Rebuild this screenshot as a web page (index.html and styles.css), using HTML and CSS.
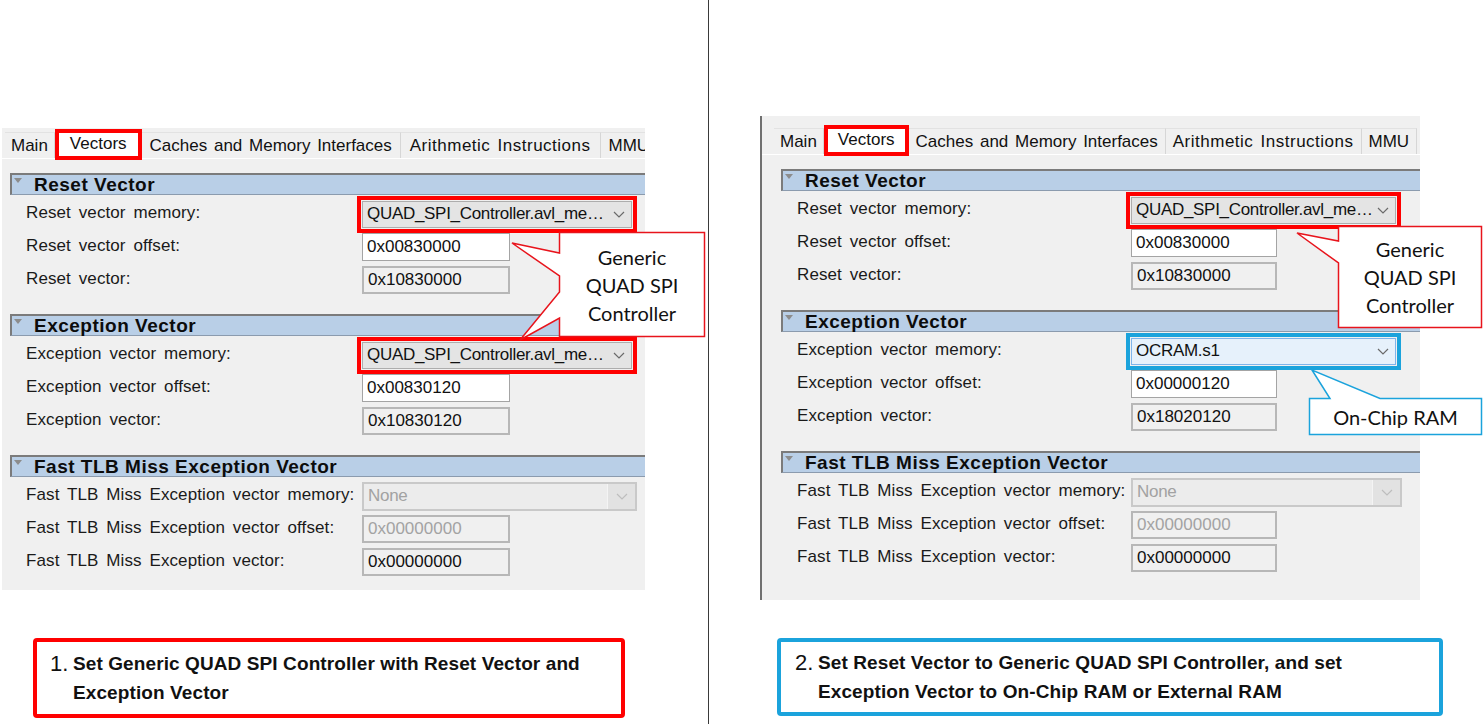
FILE: index.html
```html
<!DOCTYPE html>
<html lang="en">
<head>
<meta charset="utf-8">
<title>Vectors settings</title>
<link rel="stylesheet" href="styles.css">
</head>
<body>
<div class="canvas">
  <div class="col col-left">
    <div class="panel panel-left">
      <div class="tabs">
        <span class="tab">Main</span>
        <span class="tab active">Vectors</span>
        <span class="tab">Caches and Memory Interfaces</span>
        <span class="tab tab-wide">Arithmetic Instructions</span>
        <span class="tab">MMU</span>
      </div>
      <div class="page">
        <section class="sec">
          <div class="sec-head"><span class="tri"></span>Reset Vector</div>
          <div class="rows">
            <div class="row"><span class="lbl">Reset vector memory:</span><div class="combo mark-red"><span class="cv">QUAD_SPI_Controller.avl_me…</span><svg class="chev" width="12" height="7" viewBox="0 0 12 7"><path d="M1 1l5 5 5-5" fill="none" stroke="#6a6a6a" stroke-width="1.2"/></svg></div></div>
            <div class="row"><span class="lbl">Reset vector offset:</span><div class="field edit">0x00830000</div></div>
            <div class="row"><span class="lbl">Reset vector:</span><div class="field ro">0x10830000</div></div>
          </div>
        </section>
        <section class="sec">
          <div class="sec-head"><span class="tri"></span>Exception Vector</div>
          <div class="rows">
            <div class="row"><span class="lbl">Exception vector memory:</span><div class="combo mark-red"><span class="cv">QUAD_SPI_Controller.avl_me…</span><svg class="chev" width="12" height="7" viewBox="0 0 12 7"><path d="M1 1l5 5 5-5" fill="none" stroke="#6a6a6a" stroke-width="1.2"/></svg></div></div>
            <div class="row"><span class="lbl">Exception vector offset:</span><div class="field edit">0x00830120</div></div>
            <div class="row"><span class="lbl">Exception vector:</span><div class="field ro">0x10830120</div></div>
          </div>
        </section>
        <section class="sec">
          <div class="sec-head"><span class="tri"></span>Fast TLB Miss Exception Vector</div>
          <div class="rows">
            <div class="row"><span class="lbl">Fast TLB Miss Exception vector memory:</span><div class="combo disabled"><span class="cv">None</span><span class="btn"><svg class="chev" width="12" height="7" viewBox="0 0 12 7"><path d="M1 1l5 5 5-5" fill="none" stroke="#bdbdbd" stroke-width="1.2"/></svg></span></div></div>
            <div class="row"><span class="lbl">Fast TLB Miss Exception vector offset:</span><div class="field ro dis">0x00000000</div></div>
            <div class="row"><span class="lbl">Fast TLB Miss Exception vector:</span><div class="field ro">0x00000000</div></div>
          </div>
        </section>
      </div>
    </div>
    <div class="note note-red">
      <span class="num">1.</span>
      <div class="ntext">Set Generic QUAD SPI Controller with Reset Vector and<br>Exception Vector</div>
    </div>
  </div>

  <div class="col col-right">
    <div class="panel panel-right">
      <div class="tabs">
        <span class="tab">Main</span>
        <span class="tab active">Vectors</span>
        <span class="tab">Caches and Memory Interfaces</span>
        <span class="tab tab-wide">Arithmetic Instructions</span>
        <span class="tab">MMU</span>
      </div>
      <div class="page">
        <section class="sec">
          <div class="sec-head"><span class="tri"></span>Reset Vector</div>
          <div class="rows">
            <div class="row"><span class="lbl">Reset vector memory:</span><div class="combo mark-red"><span class="cv">QUAD_SPI_Controller.avl_me…</span><svg class="chev" width="12" height="7" viewBox="0 0 12 7"><path d="M1 1l5 5 5-5" fill="none" stroke="#6a6a6a" stroke-width="1.2"/></svg></div></div>
            <div class="row"><span class="lbl">Reset vector offset:</span><div class="field edit">0x00830000</div></div>
            <div class="row"><span class="lbl">Reset vector:</span><div class="field ro">0x10830000</div></div>
          </div>
        </section>
        <section class="sec">
          <div class="sec-head"><span class="tri"></span>Exception Vector</div>
          <div class="rows">
            <div class="row"><span class="lbl">Exception vector memory:</span><div class="combo focus mark-blue"><span class="cv">OCRAM.s1</span><svg class="chev" width="12" height="7" viewBox="0 0 12 7"><path d="M1 1l5 5 5-5" fill="none" stroke="#6a6a6a" stroke-width="1.2"/></svg></div></div>
            <div class="row"><span class="lbl">Exception vector offset:</span><div class="field edit">0x00000120</div></div>
            <div class="row"><span class="lbl">Exception vector:</span><div class="field ro">0x18020120</div></div>
          </div>
        </section>
        <section class="sec">
          <div class="sec-head"><span class="tri"></span>Fast TLB Miss Exception Vector</div>
          <div class="rows">
            <div class="row"><span class="lbl">Fast TLB Miss Exception vector memory:</span><div class="combo disabled"><span class="cv">None</span><span class="btn"><svg class="chev" width="12" height="7" viewBox="0 0 12 7"><path d="M1 1l5 5 5-5" fill="none" stroke="#bdbdbd" stroke-width="1.2"/></svg></span></div></div>
            <div class="row"><span class="lbl">Fast TLB Miss Exception vector offset:</span><div class="field ro dis">0x00000000</div></div>
            <div class="row"><span class="lbl">Fast TLB Miss Exception vector:</span><div class="field ro">0x00000000</div></div>
          </div>
        </section>
      </div>
    </div>
    <div class="note note-blue">
      <span class="num">2.</span>
      <div class="ntext">Set Reset Vector to Generic QUAD SPI Controller, and set<br>Exception Vector to On-Chip RAM or External RAM</div>
    </div>
  </div>

  <div class="callout co-left">
    <svg class="shape" width="146" height="105" viewBox="0 0 146 105"><path d="M0.5 0.5H145.5V104.5H0.5V86L-39 108L0.5 60V44L-47 11L0.5 21Z" fill="#fff" stroke="#e8141c" stroke-width="1.5"/></svg>
    <div class="ctext">Generic<br>QUAD SPI<br>Controller</div>
  </div>
  <div class="callout co-right">
    <svg class="shape" width="144" height="102" viewBox="0 0 144 102"><path d="M0.5 0.5H143.5V101.5H0.5V37L-41 7L0.5 15Z" fill="#fff" stroke="#e8141c" stroke-width="1.5"/></svg>
    <div class="ctext">Generic<br>QUAD SPI<br>Controller</div>
  </div>
  <div class="callout co-blue">
    <svg class="shape" width="173" height="37" viewBox="0 0 173 37"><path d="M0.5 0.5H21L3 -28L71 0.5H172.5V36.5H0.5Z" fill="#fff" stroke="#1ba3dc" stroke-width="1.5"/></svg>
    <div class="ctext">On-Chip RAM</div>
  </div>
</div>
</body>
</html>
```
FILE: styles.css
```css
* { box-sizing: border-box; margin: 0; padding: 0; }
html, body { width: 1483px; height: 724px; overflow: hidden; background: #fff; }
body { font-family: "Liberation Sans", Arial, sans-serif; color: #111; }

.canvas { position: relative; display: flex; width: 1483px; height: 724px; }
.col { display: flex; flex-direction: column; height: 724px; }
.col-left { width: 708px; padding-top: 128px; padding-left: 2px; }
.col-right { flex: 1; border-left: 1px solid #3a3a3a; padding-top: 116px; padding-left: 51px; }

/* dialog panels */
.panel { background: #f0f0f0; overflow: hidden; }
.panel-left { width: 643px; height: 462px; padding-top: 4px; }
.panel-right { width: 660px; height: 484px; padding-top: 12px; border-left: 2px solid #707070; }

.tabs { display: flex; height: 26px; white-space: nowrap; }
.panel-left .tabs { padding-left: 3px; }
.panel-right .tabs { padding-left: 12px; }
.tab {
  display: flex; align-items: center; padding: 0 8px;
  font-size: 17px; word-spacing: 2px;
  border-right: 1px solid #d6d6d6; border-top: 1px solid #e2e2e2;
  background: #f0f0f0; flex-shrink: 0;
}
.tab:first-child { padding: 0 6px; }
.tab-wide { padding: 0 9px; letter-spacing: 0.5px; }
.tab.active {
  position: relative; z-index: 1;
  background: #fff; border: 4px solid #f00;
  padding: 0 11px 2px; margin-top: -3px; margin-bottom: -2px;
}
.panel-right .tab { padding: 0 7px; }
.panel-right .tab:first-child { padding: 0 6px; }
.panel-right .tab-wide { padding: 0 7px; }
.panel-right .tab.active { padding: 0 10px 2px; }

.page { border-top: 1px solid #fff; padding-top: 14px; }
.panel-left .page { padding-left: 8px; }
.panel-right .page { padding-left: 19px; }

.sec { margin-bottom: 20px; }
.sec-head {
  display: flex; align-items: center; height: 22px;
  background: #b9cfe7;
  border-top: 2px solid #7b7b7b; border-left: 2px solid #7b7b7b; border-bottom: 1px solid #8b9bae;
  font-weight: bold; font-size: 19px; letter-spacing: 0.5px; color: #0c0c0c;
}
.tri {
  align-self: flex-start; margin: 3px 12px 0 2px;
  width: 0; height: 0;
  border-left: 4px solid transparent; border-right: 4px solid transparent;
  border-top: 5px solid #8c8c8c;
}

.rows { display: flex; flex-direction: column; gap: 5px; padding-top: 5px; }
.row { display: flex; align-items: center; height: 28px; padding-left: 16px; }
.lbl { width: 336px; flex-shrink: 0; font-size: 17px; word-spacing: 3px; letter-spacing: 0.1px; white-space: nowrap; padding-bottom: 3px; color: #1a1a1a; }
.panel-right .lbl { width: 334px; }

.combo {
  display: flex; align-items: center; justify-content: space-between;
  width: 270px; height: 27px; padding: 0 6px 0 4px;
  background: #e4e4e4; border: 1px solid #adadad;
  font-size: 17px; letter-spacing: -0.3px; white-space: nowrap;
}
.panel-right .combo { width: 265px; }
.combo .cv { overflow: hidden; }
.mark-red { outline: 4px solid #f00; outline-offset: 1px; }
.mark-blue { outline: 4px solid #1ba3dc; outline-offset: 1px; }
.combo.focus { background: #e6f1fb; border-color: #7eb4ea; }
.combo.disabled {
  width: 275px; height: 29px; padding: 0;
  background: #ececec; border: 2px solid #c9c9c9; color: #a2a2a2;
}
.panel-right .combo.disabled { width: 271px; }
.combo.disabled .cv { flex: 1; padding-left: 4px; }
.combo.disabled .btn {
  display: flex; align-items: center; justify-content: center;
  width: 28px; height: 100%; background: #e2e2e2; border-left: 1px solid #f4f4f4;
}

.field {
  display: flex; align-items: center;
  width: 148px; height: 28px; padding-left: 4px;
  border: 2px solid #b7b7b7; font-size: 17px;
}
.panel-right .field { width: 146px; }
.field.edit { background: #fff; border: 1px solid #a4a4a4; }
.field.ro { background: #f0f0f0; }
.field.dis { color: #a3a3a3; }

/* notes */
.note {
  display: flex; border-radius: 4px; padding: 7px 0 0 13px;
  color: #111;
}
.note-red { margin-top: 48px; margin-left: 31px; width: 592px; height: 80px; border: 4px solid #f00; }
.note-blue { margin-top: 38px; margin-left: 17px; width: 666px; height: 78px; border: 4px solid #1ba3dc; padding-left: 14px; padding-top: 6px; }
.num { width: 23px; flex-shrink: 0; font-size: 22px; line-height: 29px; }
.ntext { font-weight: bold; font-size: 19px; line-height: 29px; letter-spacing: 0.1px; white-space: nowrap; }

/* callouts */
.callout { position: absolute; z-index: 5; }
.callout .shape { position: absolute; left: 0; top: 0; overflow: visible; }
.ctext {
  position: relative; height: 100%;
  display: flex; align-items: center; justify-content: center; text-align: center;
  font-family: Lato, "Open Sans", sans-serif; font-size: 20px; line-height: 28px; color: #111;
}
.co-left { left: 559px; top: 232px; width: 146px; height: 105px; }
.co-right { left: 1338px; top: 226px; width: 144px; height: 102px; }
.co-blue { left: 1309px; top: 398px; width: 173px; height: 37px; }
```
